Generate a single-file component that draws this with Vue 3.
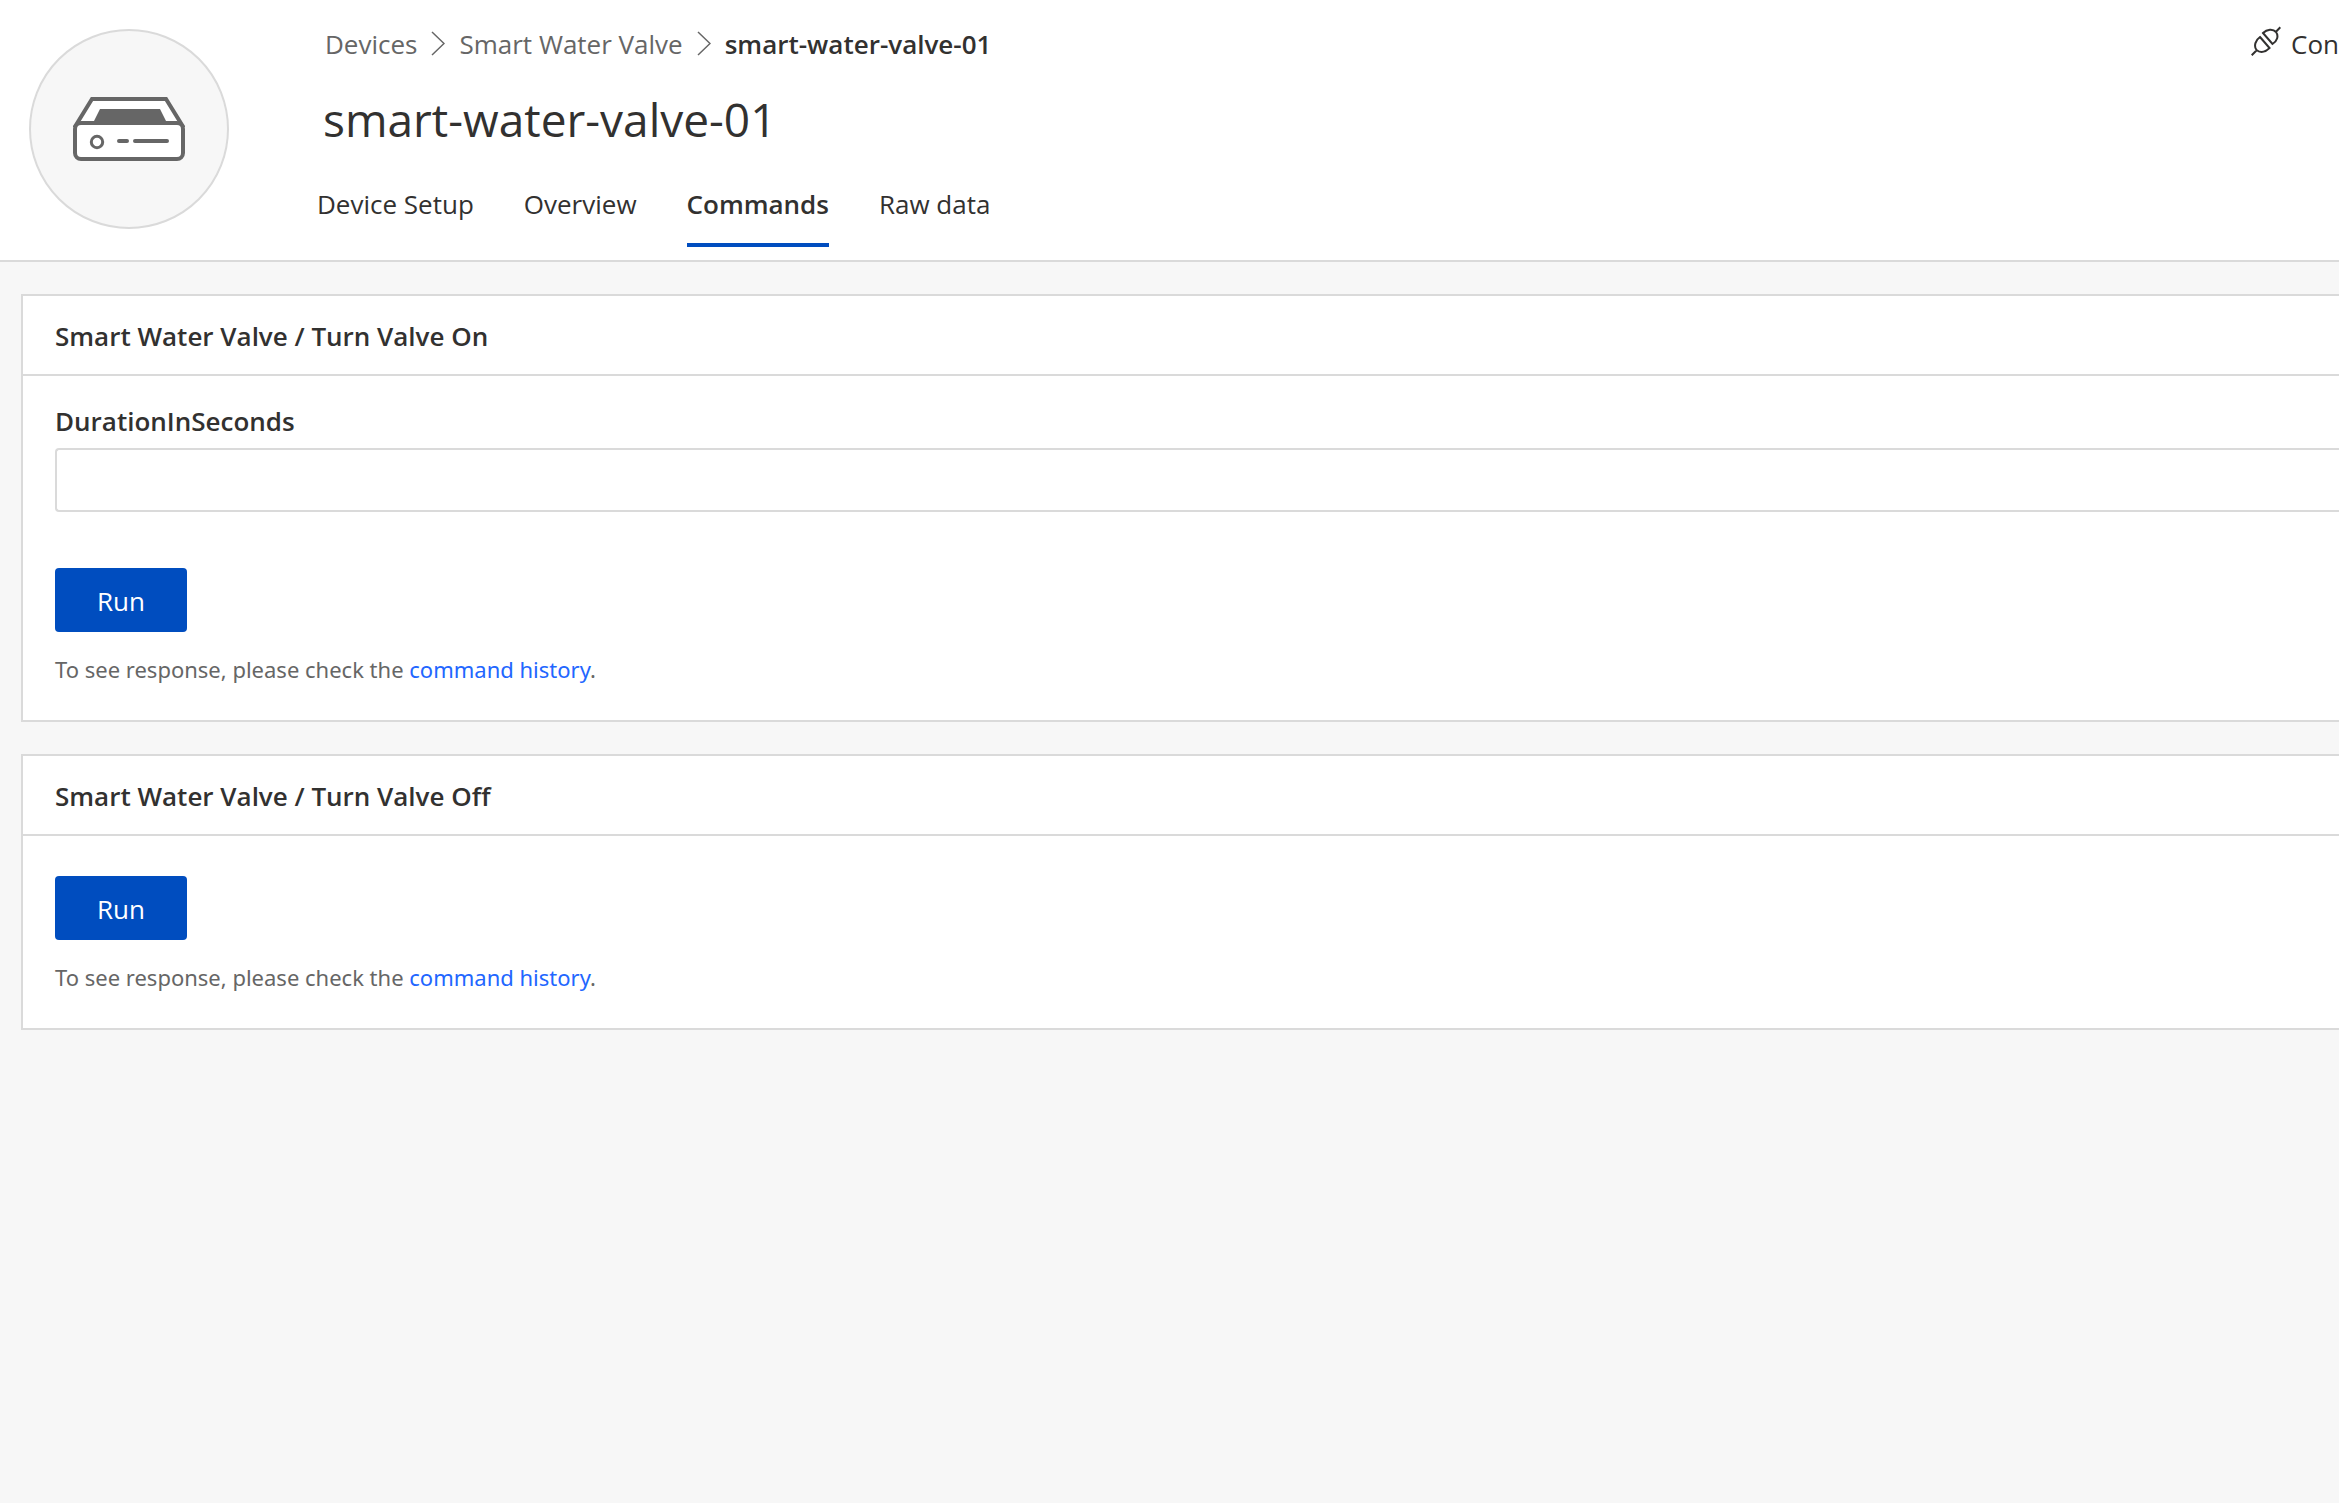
<script setup>
import { ref } from 'vue'

const deviceName = 'smart-water-valve-01'
const tabs = ['Device Setup', 'Overview', 'Commands', 'Raw data']
const activeTab = ref('Commands')
const commands = [
  { id: 'on', title: 'Smart Water Valve / Turn Valve On', fields: ['DurationInSeconds'] },
  { id: 'off', title: 'Smart Water Valve / Turn Valve Off', fields: [] },
]
const values = ref({})
</script>

<template>
  <div class="page">
    <header class="header">
      <div class="avatar">
        <svg width="112" height="64" viewBox="0 0 112 64" aria-hidden="true">
          <path d="M3 28 19 2H93L109 28Z" fill="#fff" stroke="#666" stroke-width="4" />
          <path d="M19 28 27 12H87L95 28Z" fill="#666" />
          <rect x="2" y="26" width="108" height="36" rx="6" fill="#fff" stroke="#666" stroke-width="4" />
          <circle cx="24" cy="45" r="5.7" fill="none" stroke="#666" stroke-width="3" />
          <path d="M46 44H54M62 44H94" stroke="#666" stroke-width="4" stroke-linecap="round" />
        </svg>
      </div>

      <div class="info">
        <div class="top-row">
          <nav class="breadcrumb" aria-label="Breadcrumb">
            <a href="#">Devices</a>
            <svg class="chevron" width="14" height="26" viewBox="0 0 14 26" aria-hidden="true">
              <path d="M1 1 13 12.5 1 24" />
            </svg>
            <a href="#">Smart Water Valve</a>
            <svg class="chevron" width="14" height="26" viewBox="0 0 14 26" aria-hidden="true">
              <path d="M1 1 13 12.5 1 24" />
            </svg>
            <strong>{{ deviceName }}</strong>
          </nav>
          <button class="connect" type="button">
            <svg width="30" height="30" viewBox="0 0 30 30" aria-hidden="true">
              <path d="M.7 29.3 5.7 24.3M25 5.7 29.3 1.3M12 7 21.5 18C26 15.5 28 10 25 6 22 2.5 16 3 12 7ZM9 11 18.5 22C14 26.5 9 27 5.5 24 2.5 20 4.5 14 9 11Z" />
            </svg>
            <span>Con</span>
          </button>
        </div>
        <h1>{{ deviceName }}</h1>
        <nav class="tabs" aria-label="Device views">
          <a
            v-for="tab in tabs"
            :key="tab"
            href="#"
            :class="{ active: tab === activeTab }"
            @click.prevent="activeTab = tab"
          >{{ tab }}</a>
        </nav>
      </div>
    </header>

    <main class="content">
      <section v-for="command in commands" :key="command.id" class="card">
        <h2>{{ command.title }}</h2>
        <form class="body" @submit.prevent>
          <div v-for="field in command.fields" :key="field" class="field">
            <label :for="field">{{ field }}</label>
            <input :id="field" v-model="values[field]" type="text" />
          </div>
          <button class="run" type="submit">Run</button>
          <p>To see response, please check the <a href="#">command history</a>.</p>
        </form>
      </section>
    </main>
  </div>
</template>

<style>
body {
  background: #f7f7f7;
}
</style>

<style scoped>
.page {
  min-height: 100vh;
  overflow-x: hidden;
  background: #f7f7f7;
  color: #323130;
  font-family: "Open Sans", "Noto Sans", sans-serif;
  font-size: 26px;
  line-height: 40px;
}

a {
  color: inherit;
  text-decoration: none;
}

.header {
  display: flex;
  align-items: flex-start;
  padding: 24px 0 13px 29px;
  border-bottom: 2px solid #dadada;
  background: #fff;
}

.avatar {
  display: flex;
  flex: none;
  align-items: center;
  justify-content: center;
  box-sizing: border-box;
  width: 200px;
  height: 200px;
  margin-top: 5px;
  border: 2px solid #dadada;
  border-radius: 50%;
  background: #f7f7f7;
}

.info {
  flex: 1;
  min-width: 0;
  padding-left: 88px;
}

.top-row {
  display: flex;
  justify-content: space-between;
  padding-left: 8px;
}

.breadcrumb {
  display: flex;
  align-items: center;
  gap: 14px;
  color: #666;
}

.breadcrumb strong {
  color: #323130;
  font-weight: 600;
}

.chevron {
  fill: none;
  stroke: #666;
  stroke-width: 1.5;
}

.connect {
  display: flex;
  align-items: flex-start;
  gap: 10px;
  padding: 0;
  border: 0;
  background: none;
  color: inherit;
  font: inherit;
}

.connect svg {
  margin-top: 2px;
  fill: none;
  stroke: #323130;
  stroke-width: 2;
}

h1 {
  margin: 25px 0 35px;
  padding-left: 6px;
  font-size: 46px;
  font-weight: 400;
  line-height: 60px;
}

.tabs {
  display: flex;
  gap: 50px;
}

.tabs a {
  padding-bottom: 19px;
  border-bottom: 4px solid transparent;
}

.tabs .active {
  border-color: #004dbf;
  font-weight: 600;
}

.content {
  display: flex;
  flex-direction: column;
  gap: 32px;
  padding: 32px 0 32px 21px;
}

.card {
  border: 2px solid #dadada;
  border-right: 0;
  background: #fff;
}

h2 {
  margin: 0;
  padding: 20px 32px 18px;
  border-bottom: 2px solid #dadada;
  font-size: 26px;
  font-weight: 600;
}

.body {
  padding: 40px 0 35px 32px;
}

.body:has(.field) {
  padding-top: 25px;
}

.field {
  display: flex;
  flex-direction: column;
  gap: 7px;
  margin-bottom: 56px;
}

label {
  font-weight: 600;
}

input {
  box-sizing: border-box;
  width: 100%;
  height: 64px;
  padding: 0 16px;
  border: 2px solid #dadada;
  border-right: 0;
  border-radius: 4px 0 0 4px;
  background: #fff;
  color: inherit;
  font: inherit;
}

.run {
  display: block;
  min-width: 132px;
  height: 64px;
  padding: 2px 40px 0;
  border: 0;
  border-radius: 4px;
  background: #004dbf;
  color: #fff;
  font: inherit;
}

p {
  margin: 21px 0 0;
  color: #666;
  font-family: "Noto Sans", "Open Sans", sans-serif;
  font-size: 22px;
  line-height: 32px;
}

p a {
  color: #2266ff;
}
</style>
